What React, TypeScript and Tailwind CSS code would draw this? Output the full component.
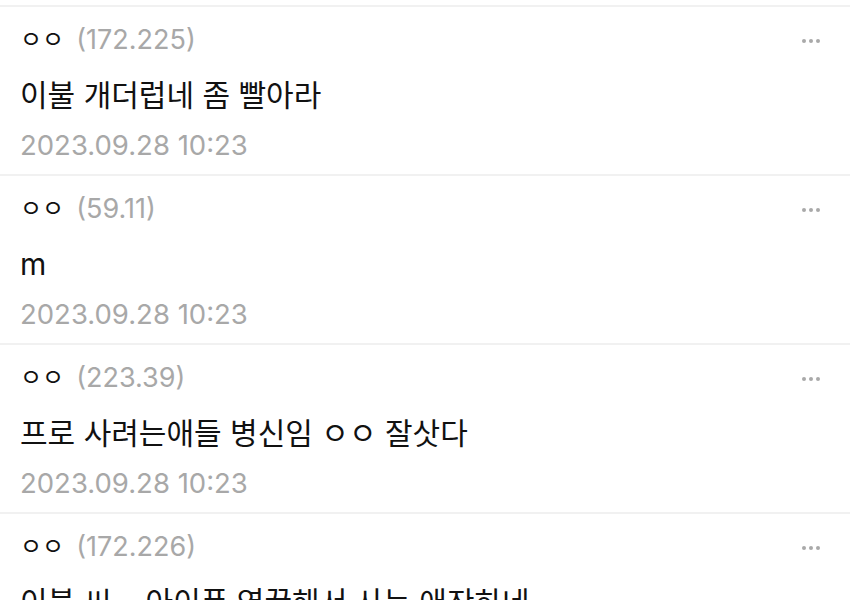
const comments = [
  { ip: "172.225", body: "이불 개더럽네 좀 빨아라", date: "2023.09.28 10:23" },
  { ip: "59.11", body: "m", date: "2023.09.28 10:23" },
  { ip: "223.39", body: "프로 사려는애들 병신임 ㅇㅇ 잘삿다", date: "2023.09.28 10:23" },
  { ip: "172.226", body: "이불 씨... 아이폰 영끌해서 사는 애잔하네", date: "2023.09.28 10:23" },
];

function MoreDots() {
  return (
    <div className="flex items-center gap-[3px] pt-[2px]">
      <span className="w-[4px] h-[4px] rounded-full bg-[#a9a9a9]" />
      <span className="w-[4px] h-[4px] rounded-full bg-[#a9a9a9]" />
      <span className="w-[4px] h-[4px] rounded-full bg-[#a9a9a9]" />
    </div>
  );
}

export default function App() {
  return (
    <div
      className="w-[850px] h-[600px] overflow-hidden bg-white"
      style={{ fontFamily: '"Inter", "Noto Sans CJK KR", sans-serif' }}
    >
      <div className="h-[5px]" />
      {comments.map((c, i) => (
        <div key={i} className="border-t-2 border-[#f1f1f1] pl-[20px] pr-[30px] pb-[12px]">
          <div className="flex items-center justify-between pt-[16px] h-[50px]">
            <div className="leading-[34px] flex items-center gap-[12px]">
              <span className="text-[24px] text-[#111]">ㅇㅇ</span>
              <span className="text-[27px] text-[#a8a8a8]">({c.ip})</span>
            </div>
            <MoreDots />
          </div>
          <div className="mt-[21px] text-[30px] leading-[34px] text-[#111]">{c.body}</div>
          <div className="mt-[16px] text-[27.5px] leading-[34px] text-[#a8a8a8]">{c.date}</div>
        </div>
      ))}
    </div>
  );
}
